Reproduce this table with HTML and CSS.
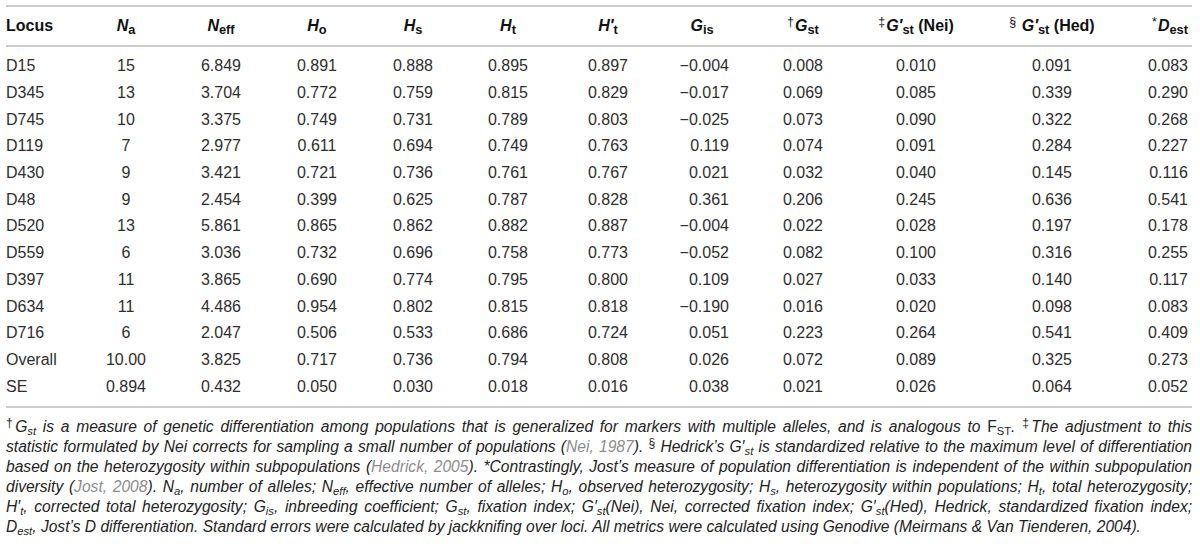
FILE: index.html
```html
<!DOCTYPE html>
<html lang="en">
<head>
<meta charset="utf-8">
<title>Genetic diversity table</title>
<link rel="stylesheet" href="styles.css">
</head>
<body>
<div class="page">
<table class="gt">
  <colgroup>
    <col class="w-locus"><col class="w-na"><col class="w-neff"><col class="w-ho"><col class="w-hs"><col class="w-ht"><col class="w-htp"><col class="w-gis"><col class="w-gst"><col class="w-nei"><col class="w-hed"><col class="w-dest">
  </colgroup>
  <thead>
    <tr>
      <th class="left">Locus</th>
      <th><i>N</i><sub>a</sub></th>
      <th><i>N</i><sub>eff</sub></th>
      <th><i>H</i><sub>o</sub></th>
      <th><i>H</i><sub>s</sub></th>
      <th><i>H</i><sub>t</sub></th>
      <th><i>H′</i><sub>t</sub></th>
      <th><i>G</i><sub>is</sub></th>
      <th><sup>†</sup><i>G</i><sub>st</sub></th>
      <th><sup>‡</sup><i>G′</i><sub>st</sub> (Nei)</th>
      <th><sup>§</sup> <i>G′</i><sub>st</sub> (Hed)</th>
      <th class="right"><sup>*</sup><i>D</i><sub>est</sub></th>
    </tr>
  </thead>
  <tbody>
    <tr class="first"><td class="left">D15</td><td>15</td><td>6.849</td><td>0.891</td><td>0.888</td><td>0.895</td><td>0.897</td><td class="gis">−0.004</td><td>0.008</td><td>0.010</td><td>0.091</td><td class="right">0.083</td></tr>
    <tr><td class="left">D345</td><td>13</td><td>3.704</td><td>0.772</td><td>0.759</td><td>0.815</td><td>0.829</td><td class="gis">−0.017</td><td>0.069</td><td>0.085</td><td>0.339</td><td class="right">0.290</td></tr>
    <tr><td class="left">D745</td><td>10</td><td>3.375</td><td>0.749</td><td>0.731</td><td>0.789</td><td>0.803</td><td class="gis">−0.025</td><td>0.073</td><td>0.090</td><td>0.322</td><td class="right">0.268</td></tr>
    <tr><td class="left">D119</td><td>7</td><td>2.977</td><td>0.611</td><td>0.694</td><td>0.749</td><td>0.763</td><td class="gis">0.119</td><td>0.074</td><td>0.091</td><td>0.284</td><td class="right">0.227</td></tr>
    <tr><td class="left">D430</td><td>9</td><td>3.421</td><td>0.721</td><td>0.736</td><td>0.761</td><td>0.767</td><td class="gis">0.021</td><td>0.032</td><td>0.040</td><td>0.145</td><td class="right">0.116</td></tr>
    <tr><td class="left">D48</td><td>9</td><td>2.454</td><td>0.399</td><td>0.625</td><td>0.787</td><td>0.828</td><td class="gis">0.361</td><td>0.206</td><td>0.245</td><td>0.636</td><td class="right">0.541</td></tr>
    <tr><td class="left">D520</td><td>13</td><td>5.861</td><td>0.865</td><td>0.862</td><td>0.882</td><td>0.887</td><td class="gis">−0.004</td><td>0.022</td><td>0.028</td><td>0.197</td><td class="right">0.178</td></tr>
    <tr><td class="left">D559</td><td>6</td><td>3.036</td><td>0.732</td><td>0.696</td><td>0.758</td><td>0.773</td><td class="gis">−0.052</td><td>0.082</td><td>0.100</td><td>0.316</td><td class="right">0.255</td></tr>
    <tr><td class="left">D397</td><td>11</td><td>3.865</td><td>0.690</td><td>0.774</td><td>0.795</td><td>0.800</td><td class="gis">0.109</td><td>0.027</td><td>0.033</td><td>0.140</td><td class="right">0.117</td></tr>
    <tr><td class="left">D634</td><td>11</td><td>4.486</td><td>0.954</td><td>0.802</td><td>0.815</td><td>0.818</td><td class="gis">−0.190</td><td>0.016</td><td>0.020</td><td>0.098</td><td class="right">0.083</td></tr>
    <tr><td class="left">D716</td><td>6</td><td>2.047</td><td>0.506</td><td>0.533</td><td>0.686</td><td>0.724</td><td class="gis">0.051</td><td>0.223</td><td>0.264</td><td>0.541</td><td class="right">0.409</td></tr>
    <tr><td class="left">Overall</td><td>10.00</td><td>3.825</td><td>0.717</td><td>0.736</td><td>0.794</td><td>0.808</td><td class="gis">0.026</td><td>0.072</td><td>0.089</td><td>0.325</td><td class="right">0.273</td></tr>
    <tr class="last"><td class="left">SE</td><td>0.894</td><td>0.432</td><td>0.050</td><td>0.030</td><td>0.018</td><td>0.016</td><td class="gis">0.038</td><td>0.021</td><td>0.026</td><td>0.064</td><td class="right">0.052</td></tr>
  </tbody>
</table>
<div class="notes">
  <span class="ln"><sup>†</sup>G<sub>st</sub> is a measure of genetic differentiation among populations that is generalized for markers with multiple alleles, and is analogous to <span class="up">F<sub>ST</sub></span>. <sup>‡</sup>The adjustment to this</span>
  <span class="ln">statistic formulated by Nei corrects for sampling a small number of populations (<span class="cite">Nei, 1987</span>). <sup>§</sup> Hedrick’s G′<sub>st</sub> is standardized relative to the maximum level of differentiation</span>
  <span class="ln">based on the heterozygosity within subpopulations (<span class="cite">Hedrick, 2005</span>). *Contrastingly, Jost’s measure of population differentiation is independent of the within subpopulation</span>
  <span class="ln">diversity (<span class="cite">Jost, 2008</span>). N<sub>a</sub>, number of alleles; N<sub>eff</sub>, effective number of alleles; H<sub>o</sub>, observed heterozygosity; H<sub>s</sub>, heterozygosity within populations; H<sub>t</sub>, total heterozygosity;</span>
  <span class="ln">H′<sub>t</sub>, corrected total heterozygosity; G<sub>is</sub>, inbreeding coefficient; G<sub>st</sub>, fixation index; G′<sub>st</sub>(Nei), Nei, corrected fixation index; G′<sub>st</sub>(Hed), Hedrick, standardized fixation index;</span>
  <span class="ln end">D<sub>est</sub>, Jost’s D differentiation. Standard errors were calculated by jackknifing over loci. All metrics were calculated using Genodive (Meirmans &amp; Van Tienderen, 2004).</span>
</div>
</div>
</body>
</html>
```

FILE: styles.css
```css
html, body {
  margin: 0;
  padding: 0;
  background: #ffffff;
}

.page {
  padding: 5px 8px 0 6px;
  font-family: "Liberation Sans", Arial, sans-serif;
  color: #2e2e2e;
}

.gt {
  width: 1186px;
  border-collapse: collapse;
  table-layout: fixed;
  border-top: 2px solid #cdcdcd;
  border-bottom: 2px solid #cdcdcd;
  font-size: 16px;
}

.w-locus { width: 66px; }
.w-na { width: 108px; }
.w-neff { width: 82px; }
.w-ho { width: 110px; }
.w-hs { width: 82px; }
.w-ht { width: 108px; }
.w-htp { width: 92px; }
.w-gis { width: 96px; }
.w-gst { width: 106px; }
.w-nei { width: 120px; }
.w-hed { width: 152px; }
.w-dest { width: 64px; }

.gt th {
  height: 38px;
  padding: 0;
  font-weight: bold;
  color: #111;
  text-align: center;
  white-space: nowrap;
  border-bottom: 2px solid #cdcdcd;
}

.gt th i {
  font-style: italic;
}

.gt th sub {
  font-size: 0.8em;
  vertical-align: -0.2em;
  line-height: 0;
  font-style: normal;
}

.gt th sup {
  font-size: 0.78em;
  vertical-align: 0.4em;
  line-height: 0;
  font-weight: normal;
  margin-right: 1px;
}

.gt td {
  height: 26.7px;
  padding: 0;
  text-align: center;
  white-space: nowrap;
}

.gt tr.first td {
  padding-top: 6px;
}

.gt tr.last td {
  padding-bottom: 6px;
}

.gt .left {
  text-align: left;
}

.gt .right {
  text-align: right;
  padding-right: 4px;
}

.gt td.gis {
  text-align: right;
  padding-right: 21px;
}

.notes {
  margin-top: 9px;
  width: 1186px;
  font-size: 15.6px;
  font-style: italic;
  line-height: 20px;
  color: #222;
}

.ln {
  display: block;
  white-space: nowrap;
  text-align: justify;
  text-align-last: justify;
}

.ln.end {
  text-align-last: left;
}

.notes sub {
  font-size: 0.72em;
  vertical-align: -0.25em;
  line-height: 0;
}

.notes sup {
  font-size: 0.78em;
  vertical-align: 0.4em;
  line-height: 0;
  font-style: normal;
}

.notes .up {
  font-style: normal;
}

.cite {
  color: #8c8c8c;
}
```
